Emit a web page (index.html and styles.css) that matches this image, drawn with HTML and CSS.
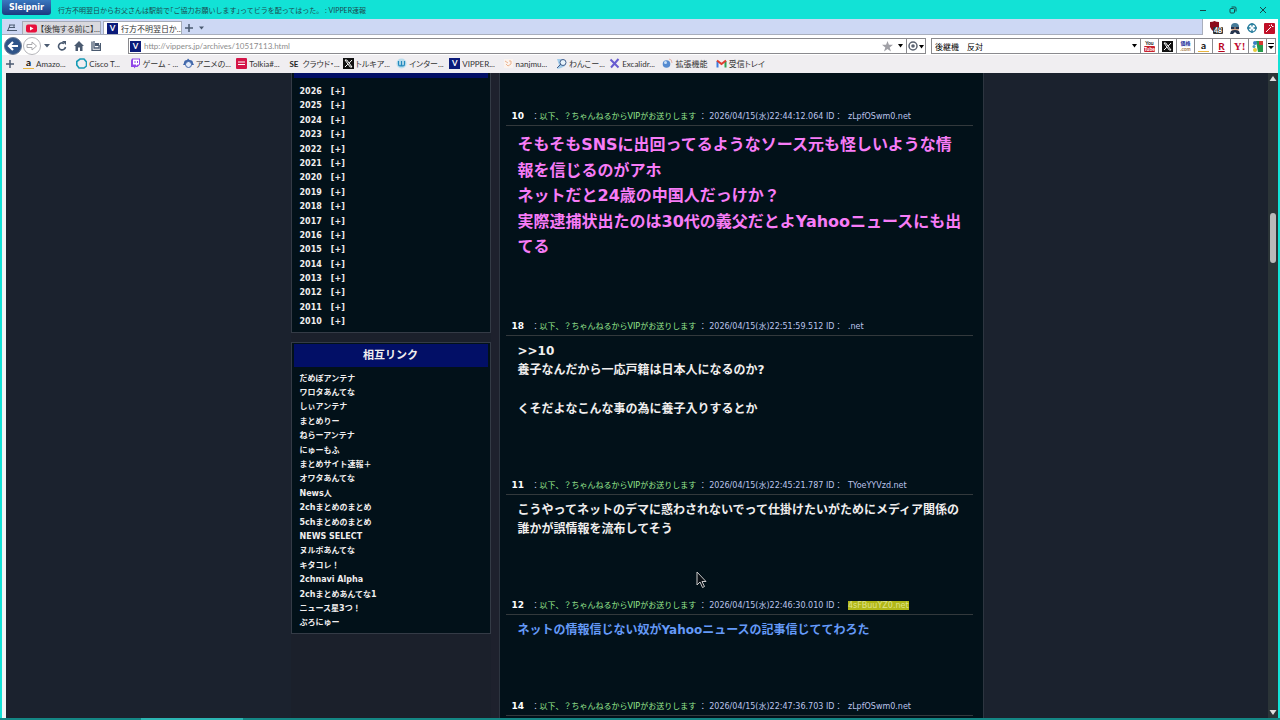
FILE: index.html
```html
<!DOCTYPE html>
<html lang="ja">
<head>
    <meta charset="UTF-8">
    <meta name="viewport" content="width=device-width, initial-scale=1.0">
    <title>VIPPER速報</title>
    <link rel="stylesheet" href="styles.css">
</head>
<body>
    <div class="window">
        <header class="title-bar">
            <button class="app-logo">Sleipnir</button>
            <span class="window-title">行方不明翌日からお父さんは駅前で｢ご協力お願いします｣ってビラを配ってはった。 : VIPPER速報</span>
            <div class="window-buttons">
                <button aria-label="最小化"><svg width="10" height="10" viewBox="0 0 10 10"><path d="M2 5.5h6"/></svg></button>
                <button aria-label="元に戻す"><svg width="10" height="10" viewBox="0 0 10 10"><rect x="2" y="3.5" width="4.5" height="4.5" rx="1"/><path d="M3.5 2h3.5a1 1 0 0 1 1 1v3.5"/></svg></button>
                <button aria-label="閉じる"><svg width="10" height="10" viewBox="0 0 10 10"><path d="M2 2l6 6M8 2l-6 6"/></svg></button>
            </div>
        </header>

        <div class="tab-row">
            <div class="tab-bar">
                <button class="tab-tool" aria-label="タブ一覧"><svg width="10" height="8" viewBox="0 0 10 8"><path d="M2 1h6M2 3.500h6M0 6.500h10M3 1L1 6M7 1v3" stroke="#4a5a70" fill="none"/></svg></button>
                <button class="tab">
                    <svg width="11" height="11" viewBox="0 0 11 11"><rect y="1.500" width="11" height="8" rx="2" fill="#e8103c"/><path d="M4 3.500v4l3.500-2z" fill="#fff"/></svg>
                    <span>【後悔する前に】...</span>
                </button>
                <button class="tab active">
                    <span class="v-icon">V</span>
                    <span>行方不明翌日か...</span>
                </button>
                <button class="tab-tool" aria-label="新しいタブ"><svg width="10" height="10" viewBox="0 0 10 10"><path d="M5 1v8M1 5h8" stroke="#4a5a70" stroke-width="1.500"/></svg></button>
                <button class="tab-tool" aria-label="タブメニュー"><svg width="6" height="4" viewBox="0 0 6 4"><path d="M0 0.500h5l-2.500 3z" fill="#4a5a70"/></svg></button>
            </div>
            <div class="extensions">
                <button aria-label="広告ブロック"><svg width="14" height="14" viewBox="0 0 14 14"><path d="M1 1q3 0 4.500-1Q7 1 10 1v5q-1 3-4.500 5Q2 9 1 6z" fill="#8c0c1c"/><rect x="4" y="6" width="10" height="7" rx="1" fill="#333"/></svg><span class="badge">48</span></button>
                <button aria-label="スクリプト"><svg width="10" height="11" viewBox="0 0 10 11"><circle cx="5" cy="5" r="4" fill="#d9a98b"/><path d="M1 4a4 4 0 0 1 8 0z" fill="#467b99"/><path d="M1 4h3.500v2H1zM5.500 4H9v2H5.500zM0 11l1-3q4-2 8 0l1 3H7L5 9l-2 2z" fill="#25354f"/></svg></button>
                <button aria-label="ターゲット"><svg width="10" height="10" viewBox="0 0 10 10"><circle cx="5" cy="5" r="4" fill="none" stroke="#267c9c" stroke-width="1.300"/><path d="M5 0v3.500M5 6.500V10M0 5h3.500M6.500 5H10" stroke="#267c9c" stroke-width="1.300"/></svg></button>
                <button aria-label="マジックワンド"><svg width="11" height="11" viewBox="0 0 11 11"><rect width="11" height="11" rx="1" fill="#c01028"/><path d="M2 9l5-5M7.500 1.500v1.500M9.500 3.500H8M5 2l.8.8" stroke="#fff"/></svg></button>
            </div>
        </div>

        <div class="address-row">
            <button class="round back" aria-label="戻る"><svg width="12" height="12" viewBox="0 0 12 12"><path d="M6 2L2 6l4 4M2 6h9" fill="none" stroke="#fff" stroke-width="2.200"/></svg></button>
            <button class="round forward" aria-label="進む"><svg width="12" height="12" viewBox="0 0 12 12"><path d="M1 4.500h5V2l4.500 4L6 10V7.500H1z" fill="#fff" stroke="#a8a8ac"/></svg></button>
            <button class="nav-button small" aria-label="履歴"><svg width="6" height="4" viewBox="0 0 6 4"><path d="M0 0h6L3 3.500z" fill="#4a5a70"/></svg></button>
            <button class="nav-button" aria-label="更新"><svg width="10" height="10" viewBox="0 0 10 10"><path d="M7 2.500A3.500 3.500 0 1 0 8.500 6" fill="none" stroke="#4a5a70" stroke-width="1.600"/><path d="M5 0h4v4z" fill="#4a5a70"/></svg></button>
            <button class="nav-button" aria-label="ホーム"><svg width="10" height="10" viewBox="0 0 10 10"><path d="M5 0l5 5H8.500v5H6V6.500H4V10H1.500V5H0z" fill="#4a5a70"/></svg></button>
            <button class="nav-button" aria-label="保存"><svg width="10" height="10" viewBox="0 0 10 10"><path d="M1 .5v9h8.500V2M3 0v7h5V4" fill="none" stroke="#4a5a70" stroke-width="1.300"/><path d="M4 2h4v3H4z" fill="#4a5a70"/></svg></button>

            <div class="address-box">
                <span class="v-icon">V</span>
                <input type="text" aria-label="アドレス" value="http://vippers.jp/archives/10517113.html">
                <button class="star" aria-label="お気に入り"><svg width="11" height="11" viewBox="0 0 10 10"><path d="M5 0l1.300 3.500H10L7 5.800 8.200 9.500 5 7.300 1.800 9.500 3 5.800 0 3.500h3.700z" fill="#a0a0a6"/></svg></button>
                <button class="drop" aria-label="候補"><svg width="5" height="4" viewBox="0 0 5 4"><path d="M0 0h5L2.500 3.500z"/></svg></button>
                <button class="engine" aria-label="エンジン切替"><svg width="16" height="10" viewBox="0 0 16 10"><circle cx="5" cy="5" r="4" fill="none" stroke="#5a6270" stroke-width="1.500"/><circle cx="5" cy="5" r="1.800" fill="#5a6270"/><path d="M11 4h5l-2.500 3.500z"/></svg></button>
            </div>

            <div class="search-box">
                <input type="text" aria-label="検索" value="後継機　反対">
                <button class="drop" aria-label="検索履歴"><svg width="5" height="4" viewBox="0 0 5 4"><path d="M0 0h5L2.500 3.500z"/></svg></button>
                <button class="site youtube" aria-label="YouTube"><span>You</span><span>Tube</span></button>
                <button class="site" aria-label="X"><svg width="11" height="11" viewBox="0 0 11 11"><rect width="11" height="11" fill="#111"/><path d="M2 2h1.800L9 9H7.200zM9 2L6.200 5M4.800 6.200L2 9" fill="none" stroke="#fff"/></svg></button>
                <button class="site kakaku" aria-label="価格.com"><span>価格</span><span>.com</span></button>
                <button class="site amazon" aria-label="Amazon"><span class="amazon-icon">a</span></button>
                <button class="site rakuten" aria-label="楽天">R</button>
                <button class="site yahoo" aria-label="Yahoo!">Y!</button>
                <button class="site" aria-label="地図"><svg width="11" height="11" viewBox="0 0 11 11"><path d="M4 0h7v11H6z" fill="#25994b"/><path d="M7 0h4v4H7z" fill="#d43b32"/><circle cx="3" cy="2" r="2" fill="#387fc3"/><circle cx="2" cy="5.500" r="1.500" fill="#47a0bb"/><circle cx="3" cy="9" r="2" fill="#e8cb39"/></svg></button>
                <button class="site last" aria-label="その他"><svg width="6" height="7" viewBox="0 0 6 7"><path d="M0 0h6v1H0zM0 3h6L3 6z"/></svg></button>
            </div>
        </div>

        <nav class="bookmarks">
            <button class="add" aria-label="追加"><svg width="10" height="10" viewBox="0 0 10 10"><path d="M5 1v8M1 5h8" stroke="#4a5a70" stroke-width="1.500"/></svg></button>
            <div class="bookmark-list">
                <a href="#"><span class="amazon-icon">a</span>Amazo...</a>
                <a href="#"><svg width="11" height="11" viewBox="0 0 11 11"><path d="M4 1h4l2.500 3v4L8 10H3L.8 7V3.500z" fill="none" stroke="#179bb5" stroke-width="1.600"/></svg>Cisco T...</a>
                <a href="#"><svg width="11" height="11" viewBox="0 0 11 11"><path d="M2 .5h8v6L7.500 9H5.500L4 10.500V9H1V2.500z" fill="#9147e8"/><path d="M3 1.500h6v5H7.500L6 8V6.500H3z" fill="#fff"/><path d="M5 3v2M7.500 3v2" stroke="#9147e8"/></svg>ゲーム - ...</a>
                <a href="#"><svg width="11" height="11" viewBox="0 0 11 11"><path d="M1 5q0-3 3-3l1-1.500L6.500 2Q10 2 10 5l1 2H0z" fill="#3f66aa"/><circle cx="5.500" cy="6.500" r="3" fill="#e3ebfa" stroke="#3f66aa"/></svg>アニメの...</a>
                <a href="#"><svg width="11" height="11" viewBox="0 0 11 11"><rect width="11" height="11" rx="1" fill="#d41548"/><path d="M2 4h7M2 6.500h7" stroke="#fff"/></svg>Tolkia#...</a>
                <a href="#"><span class="se-icon">SE</span>クラウド・...</a>
                <a href="#"><svg width="11" height="11" viewBox="0 0 11 11"><rect width="11" height="11" fill="#111"/><path d="M2 2h1.800L9 9H7.200zM9 2L6.200 5M4.800 6.200L2 9" fill="none" stroke="#fff"/></svg>トルキア...</a>
                <a href="#"><svg width="11" height="11" viewBox="0 0 11 11"><circle cx="5.500" cy="5.500" r="5" fill="#b9dded"/><path d="M2.500 3v3q0 2 1.500 2t1.500-2V3v3q0 2 1.500 2t1.500-2V3" fill="none" stroke="#2389bd" stroke-width="1.200"/></svg>インター...</a>
                <a href="#"><span class="v-icon">V</span>VIPPER...</a>
                <a href="#"><svg width="11" height="11" viewBox="0 0 11 11"><rect x="1" y="1" width="9" height="9" fill="#fbf3ee"/><path d="M2 3l3 2M6 3h2v3L5 8 3 6" fill="none" stroke="#ebb491"/></svg>nanjmu...</a>
                <a href="#"><svg width="11" height="11" viewBox="0 0 11 11"><path d="M1 1h5l4 3-1 4-4 2-4 1 2-4z" fill="#a3cceb"/><circle cx="7" cy="4.500" r="3" fill="#e8f3fb" stroke="#425e8b"/><path d="M1 10l4-4" stroke="#425e8b"/></svg>わんこー...</a>
                <a href="#"><svg width="11" height="11" viewBox="0 0 11 11"><path d="M1.500 1.500l8 8M9.500 1L2 9.500" stroke="#675bd0" stroke-width="2"/></svg>Excalidr...</a>
                <a href="#"><svg width="11" height="11" viewBox="0 0 11 11"><circle cx="4.500" cy="6" r="3.800" fill="#568bd0"/><circle cx="3.500" cy="4.500" r="1.500" fill="#c8e0f8"/><path d="M7 1q3 0 3 4" fill="none" stroke="#e5b4a9"/></svg>拡張機能</a>
                <a href="#"><svg width="11" height="11" viewBox="0 0 11 11"><path d="M1.500 9.500V3" stroke="#3b7de0" stroke-width="2"/><path d="M9.500 9.500V3" stroke="#2fa354" stroke-width="2"/><path d="M1 2.500l4.500 3.500L10 2.500" fill="none" stroke="#de3c30" stroke-width="2"/></svg>受信トレイ</a>
            </div>
        </nav>

        <div class="viewport">
            <div class="page">
                <div class="wrapper">
                    <aside class="sidebar">
                        <section class="panel cut">
                            <div class="panel-strip"></div>
                            <ul class="years">
                                <li><span>2026</span><a href="#">[+]</a></li>
                                <li><span>2025</span><a href="#">[+]</a></li>
                                <li><span>2024</span><a href="#">[+]</a></li>
                                <li><span>2023</span><a href="#">[+]</a></li>
                                <li><span>2022</span><a href="#">[+]</a></li>
                                <li><span>2021</span><a href="#">[+]</a></li>
                                <li><span>2020</span><a href="#">[+]</a></li>
                                <li><span>2019</span><a href="#">[+]</a></li>
                                <li><span>2018</span><a href="#">[+]</a></li>
                                <li><span>2017</span><a href="#">[+]</a></li>
                                <li><span>2016</span><a href="#">[+]</a></li>
                                <li><span>2015</span><a href="#">[+]</a></li>
                                <li><span>2014</span><a href="#">[+]</a></li>
                                <li><span>2013</span><a href="#">[+]</a></li>
                                <li><span>2012</span><a href="#">[+]</a></li>
                                <li><span>2011</span><a href="#">[+]</a></li>
                                <li><span>2010</span><a href="#">[+]</a></li>
                            </ul>
                        </section>

                        <section class="panel">
                            <h2>相互リンク</h2>
                            <ul>
                                <li><a href="#">だめぽアンテナ</a></li>
                                <li><a href="#">ワロタあんてな</a></li>
                                <li><a href="#">しぃアンテナ</a></li>
                                <li><a href="#">まとめりー</a></li>
                                <li><a href="#">ねらーアンテナ</a></li>
                                <li><a href="#">にゅーもふ</a></li>
                                <li><a href="#">まとめサイト速報＋</a></li>
                                <li><a href="#">オワタあんてな</a></li>
                                <li><a href="#">News人</a></li>
                                <li><a href="#">2chまとめのまとめ</a></li>
                                <li><a href="#">5chまとめのまとめ</a></li>
                                <li><a href="#">NEWS SELECT</a></li>
                                <li><a href="#">ヌルポあんてな</a></li>
                                <li><a href="#">キタコレ！</a></li>
                                <li><a href="#">2chnavi Alpha</a></li>
                                <li><a href="#">2chまとめあんてな1</a></li>
                                <li><a href="#">ニュース星3つ！</a></li>
                                <li><a href="#">ぷろにゅー</a></li>
                            </ul>
                        </section>
                    </aside>

                    <main class="thread">
                        <article class="post">
                            <div class="post-header"><b>10</b>：<span class="name">以下、？ちゃんねるからVIPがお送りします</span> ： <span class="date">2026/04/15(水)22:44:12.064 ID： <span class="user-id">zLpfOSwm0.net</span></span></div>
                            <div class="post-body pink">そもそもSNSに出回ってるようなソース元も怪しいような情報を信じるのがアホ<br>ネットだと24歳の中国人だっけか？<br>実際逮捕状出たのは30代の義父だとよYahooニュースにも出てる</div>
                        </article>
                        <article class="post">
                            <div class="post-header"><b>18</b>：<span class="name">以下、？ちゃんねるからVIPがお送りします</span> ： <span class="date">2026/04/15(水)22:51:59.512 ID： <span class="user-id">.net</span></span></div>
                            <div class="post-body">&gt;&gt;10<br>養子なんだから一応戸籍は日本人になるのか?<br><br>くそだよなこんな事の為に養子入りするとか</div>
                        </article>
                        <article class="post">
                            <div class="post-header"><b>11</b>：<span class="name">以下、？ちゃんねるからVIPがお送りします</span> ： <span class="date">2026/04/15(水)22:45:21.787 ID： <span class="user-id">TYoeYYVzd.net</span></span></div>
                            <div class="post-body">こうやってネットのデマに惑わされないでって仕掛けたいがためにメディア関係の誰かが誤情報を流布してそう</div>
                        </article>
                        <article class="post">
                            <div class="post-header"><b>12</b>：<span class="name">以下、？ちゃんねるからVIPがお送りします</span> ： <span class="date">2026/04/15(水)22:46:30.010 ID： <mark class="user-id">4sFBuuYZ0.net</mark></span></div>
                            <div class="post-body blue">ネットの情報信じない奴がYahooニュースの記事信じててわろた</div>
                        </article>
                        <article class="post">
                            <div class="post-header"><b>14</b>：<span class="name">以下、？ちゃんねるからVIPがお送りします</span> ： <span class="date">2026/04/15(水)22:47:36.703 ID： <span class="user-id">zLpfOSwm0.net</span></span></div>
                        </article>
                    </main>
                </div>
            </div>
            <div class="scrollbar">
                <svg width="8" height="6" viewBox="0 0 8 6"><path d="M4 0l3.500 5h-7z" fill="#ddd"/></svg>
                <div class="thumb"></div>
                <svg class="down" width="8" height="6" viewBox="0 0 8 6"><path d="M4 6l3.500-5h-7z" fill="#ddd"/></svg>
            </div>
        </div>
        <div class="bottom-edge"></div>

        <svg class="cursor" width="12" height="18" viewBox="0 0 12 18"><path d="M1 1v13l3-3 2.500 5.500 2-1L6 10.500h4z" fill="#0b1015" stroke="#c9c9c9"/></svg>
    </div>
</body>
</html>
```
FILE: styles.css
```css
* {
    box-sizing: border-box;
}

body {
    margin: 0;
    font-family: Lato, "Noto Sans CJK JP", sans-serif;
    font-size: 8px;
    color: #333;
    background-color: #12e2d6;
}

button {
    padding: 0;
    border: none;
    background: none;
    font: inherit;
    color: inherit;
    display: flex;
    align-items: center;
    justify-content: center;
}

input {
    border: none;
    outline: none;
    padding: 0;
    font: inherit;
    background: none;
    min-width: 0;
}

a {
    color: inherit;
    text-decoration: none;
}

ul {
    list-style: none;
    margin: 0;
    padding: 0;
}

svg {
    flex-shrink: 0;
}

.window {
    position: relative;
    display: flex;
    flex-direction: column;
    height: 100vh;
    overflow: hidden;
    padding: 0 2px;
}

/* title bar */
.title-bar {
    display: flex;
    align-items: center;
    height: 19px;
    flex-shrink: 0;
}

.app-logo {
    width: 49px;
    height: 15px;
    align-self: flex-start;
    border-radius: 0 0 3px 3px;
    background: linear-gradient(#3a78c0, #1b3a80);
    color: #fff;
    font-family: "DejaVu Sans", sans-serif;
    font-weight: bold;
}

.window-title {
    flex: 1;
    margin-left: 7px;
    color: #1c4a50;
    font-size: 7px;
}

.window-buttons {
    display: flex;
    gap: 20px;
    padding-right: 10px;
}

.window-buttons svg {
    fill: none;
    stroke: #17484a;
}

/* tabs */
.tab-row {
    display: flex;
    height: 18px;
    flex-shrink: 0;
    background-color: #fff;
}

.tab-bar {
    flex: 1;
    display: flex;
    align-items: flex-end;
    height: 16px;
    padding-left: 5px;
    background-color: #cdd8f4;
    border: 1px solid #a9afbd;
    border-top: none;
    border-left: none;
}

.tab {
    width: 79px;
    height: 13px;
    margin-right: 2px;
    padding-left: 3px;
    gap: 3px;
    justify-content: flex-start;
    border: 1px solid #a6abb8;
    border-bottom: none;
    background-color: #d9d9de;
    white-space: nowrap;
    overflow: hidden;
    font-feature-settings: "palt";
}

.tab.active {
    background-color: #fff;
}

.tab-tool {
    height: 13px;
    margin-right: 5px;
}

.v-icon {
    flex-shrink: 0;
    width: 11px;
    height: 11px;
    background-color: #0b1b7a;
    color: #fff;
    font-weight: bold;
    line-height: 11px;
    text-align: center;
}

.extensions {
    display: flex;
    align-items: center;
    gap: 7px;
    padding: 0 3px 0 6px;
}

.extensions button {
    position: relative;
}

.badge {
    position: absolute;
    right: 1px;
    bottom: 1px;
    color: #fff;
    font-weight: bold;
    font-size: 7px;
    line-height: 7px;
}

/* address row */
.address-row {
    display: flex;
    align-items: center;
    height: 18px;
    flex-shrink: 0;
    padding: 0 2px;
    background-color: #fff;
}

.round {
    width: 18px;
    height: 18px;
    border-radius: 50%;
    border: 1px solid #8f99a8;
}

.back {
    background-color: #2f5488;
    border-color: #6c7c96;
}

.forward {
    margin-left: 1px;
    border-color: #b5b5ba;
}

.nav-button {
    width: 17px;
}

.nav-button.small {
    width: 12px;
}

.address-box,
.search-box {
    display: flex;
    align-items: center;
    height: 16px;
    border: 1px solid #8a8a8e;
    background-color: #fff;
}

.address-box {
    flex: 1;
    margin-left: 24px;
    padding-left: 1px;
}

.address-box input {
    flex: 1;
    margin-left: 3px;
    color: #8c8c8c;
}

.star {
    width: 14px;
}

.drop {
    width: 12px;
    height: 14px;
}

.engine {
    width: 19px;
    height: 14px;
    border-left: 1px solid #8a8a8e;
}

.search-box {
    width: 345px;
    margin-left: 5px;
    padding-left: 3px;
}

.search-box input {
    flex: 1;
}

.site {
    width: 18px;
    height: 14px;
    border-left: 1px solid #8a8a8e;
}

.site.last {
    width: 9px;
}

.youtube,
.kakaku {
    flex-direction: column;
    font-weight: bold;
    font-size: 5px;
    line-height: 6px;
    color: #222;
}

.youtube span:last-child {
    background-color: #c8202c;
    color: #fff;
    border-radius: 1px;
}

.kakaku {
    color: #1d2f9c;
}

.kakaku span:last-child {
    color: #a87a48;
}

.rakuten {
    color: #b8001c;
    font-weight: bold;
    font-size: 10px;
    line-height: 12px;
    text-decoration: underline;
}

.yahoo {
    color: #c00c30;
    font-family: "Liberation Serif", serif;
    font-weight: bold;
    font-size: 11px;
}

.amazon-icon {
    width: 11px;
    height: 11px;
    border-bottom: 1px solid #e8b440;
    color: #111;
    font-weight: bold;
    font-size: 10px;
    line-height: 8px;
    text-align: center;
}

/* bookmarks */
.bookmarks {
    display: flex;
    align-items: center;
    height: 18px;
    flex-shrink: 0;
    padding: 0 0 1px 3px;
    background-color: #f0eef1;
}

.add {
    width: 10px;
    margin-right: 8px;
}

.bookmark-list {
    display: grid;
    grid-template-columns: repeat(14, 1fr);
    width: 746px;
}

.bookmark-list a {
    display: flex;
    align-items: center;
    gap: 2px;
    white-space: nowrap;
    font-feature-settings: "palt";
}

.se-icon {
    width: 11px;
    font-weight: bold;
    color: #222;
}

/* page */
.viewport {
    flex: 1;
    display: flex;
    min-height: 0;
    border-left: 4px solid #f2f4f4;
}

.page {
    flex: 1;
    overflow: hidden;
    background-color: #1b222e;
    font-family: "DejaVu Sans", "Noto Sans CJK JP", sans-serif;
    color: #f0eeee;
}

.wrapper {
    display: flex;
    gap: 8px;
    width: 693px;
    min-height: 100%;
    margin: 0 auto;
    background-color: #1e212d;
}

.sidebar {
    width: 200px;
    background-color: #1b202b;
}

.panel {
    margin-bottom: 9px;
    padding: 1px 2px 2px;
    border: 1px solid #343b46;
    background-color: #021119;
    font-weight: bold;
    line-height: 1.8;
}

.panel.cut {
    padding-top: 0;
    border-top: none;
}

.panel-strip {
    height: 5px;
    background-color: #020f66;
}

.panel h2 {
    margin: 0;
    padding-top: 1px;
    background-color: #020f66;
    font-size: 11px;
    line-height: 22px;
    text-align: center;
}

.panel ul {
    padding: 5px 6px 0;
}

.panel .years {
    padding-top: 7px;
}

.years li {
    display: flex;
    gap: 9px;
}

.thread {
    flex: 1;
    padding: 35px 10px 0 6px;
    border: 1px solid #2d3540;
    border-width: 0 1px;
    background-color: #021119;
}

.post {
    margin-bottom: 58px;
}

.post-header {
    padding-left: 6px;
    height: 18px;
    line-height: 16px;
    border-bottom: 1px solid #33393c;
    color: #c8cce0;
    white-space: nowrap;
}

.post-header b {
    display: inline-block;
    width: 20px;
    font-size: 9px;
    color: #fff;
}

.name {
    color: #98e890;
}

.date {
    color: #bcc4ec;
}

.user-id {
    margin-left: 3px;
}

mark {
    background-color: #b2b818;
    color: #dfe28a;
}

.post-body {
    padding: 6px 8px 0 12px;
    font-size: 12px;
    font-weight: bold;
    line-height: 1.6;
}

.post-body.pink {
    font-size: 16px;
    color: #f77cf7;
}

.post-body.blue {
    color: #659af8;
}

.scrollbar {
    display: flex;
    flex-direction: column;
    align-items: center;
    width: 10px;
    padding: 3px 0;
    background-color: #2b3437;
}

.thumb {
    width: 6px;
    height: 50px;
    margin-top: 131px;
    border-radius: 3px;
    background-color: #b9b9b9;
}

.down {
    margin-top: auto;
}

.bottom-edge {
    height: 2px;
    flex-shrink: 0;
    margin: 0 -2px;
    background: linear-gradient(to right, #148684 11%, #2cb5b2 11% 19%, #148684 19%);
}

/* mouse pointer over the thread */
.cursor {
    position: absolute;
    left: 696px;
    top: 571px;
}
```
